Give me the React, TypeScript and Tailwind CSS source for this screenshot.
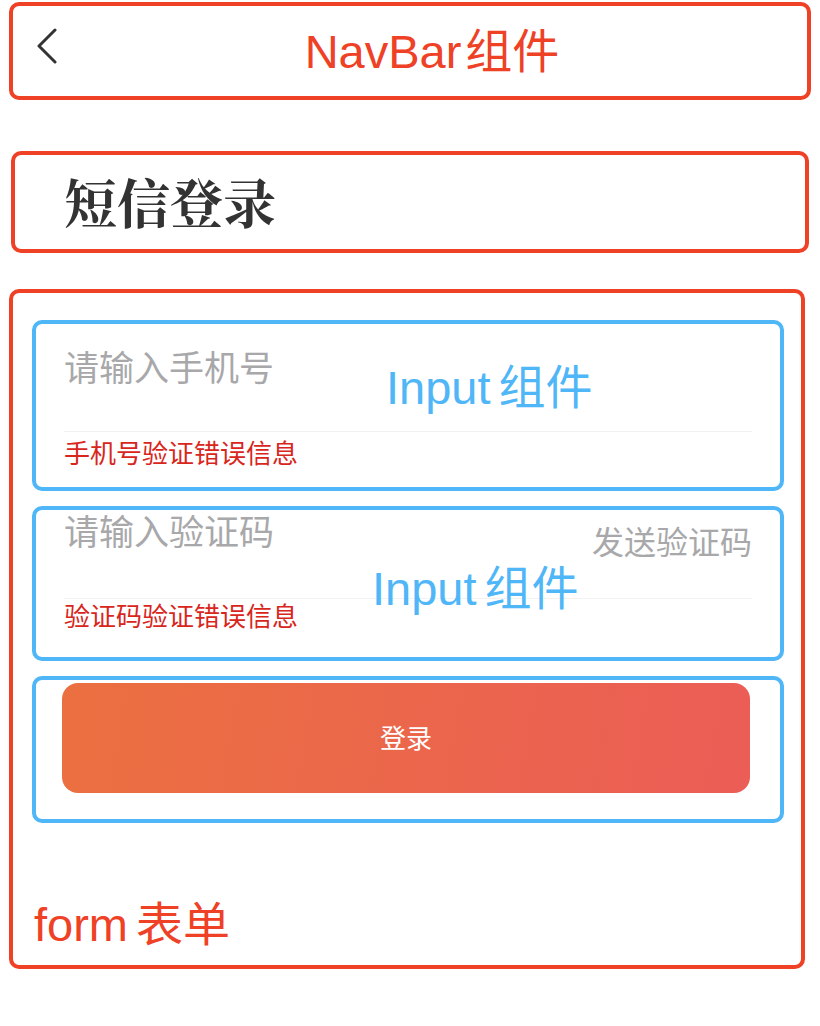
import React from 'react';

const latin = { fontFamily: '"Liberation Sans", "Noto Sans CJK SC", sans-serif' };
const cjk = { fontFamily: '"Noto Sans CJK SC", sans-serif' };
const serif = { fontFamily: '"Liberation Serif", "Noto Serif CJK SC", "Noto Sans CJK SC", serif' };

function BackIcon() {
  return (
    <svg width="24" height="36" viewBox="0 0 24 36" fill="none">
      <path d="M20 2 L4 18 L20 34" stroke="#333" strokeWidth="3" strokeLinecap="round" strokeLinejoin="round" />
    </svg>
  );
}

function InputLabel() {
  return (
    <span className="text-[47px] leading-none text-[#4fb6f7]" style={latin}>
      Input<span className="ml-[8px]">组件</span>
    </span>
  );
}

export default function App() {
  return (
    <div className="w-[820px] h-[1026px] bg-white flex flex-col">
      {/* NavBar */}
      <div className="ml-[9px] mt-[2px] w-[802px] h-[98px] border-4 border-[#ee4126] rounded-[10px] relative flex items-center justify-center">
        <div className="absolute left-[22px] top-[22px]">
          <BackIcon />
        </div>
        <span className="text-[47px] leading-none text-[#ee4126] pl-[44px]" style={latin}>
          NavBar<span className="ml-[4px]">组件</span>
        </span>
      </div>

      {/* title */}
      <div className="ml-[11px] mt-[51px] w-[798px] h-[102px] border-4 border-[#ee4126] rounded-[10px] flex items-center pl-[49px] pt-[8px]">
        <h1 className="text-[53px] leading-none font-bold text-[#333]" style={serif}>
          短信登录
        </h1>
      </div>

      {/* form */}
      <div className="ml-[9px] mt-[36px] w-[796px] h-[680px] border-4 border-[#ee4126] rounded-[10px] flex flex-col pl-[19px] pt-[27px]">
        {/* phone */}
        <div className="w-[752px] h-[171px] border-4 border-[#4fb6f7] rounded-[10px] relative flex flex-col px-[28px] pt-[24px]">
          <span className="text-[35px] leading-none text-[#a8a8aa]" style={cjk}>
            请输入手机号
          </span>
          <div className="mt-[48px] h-px bg-[#f2f2f2]" />
          <span className="mt-[7px] text-[26px] leading-none text-[#d8261c]" style={cjk}>
            手机号验证错误信息
          </span>
          <div className="absolute left-[350px] top-[40px]">
            <InputLabel />
          </div>
        </div>

        {/* code */}
        <div className="mt-[15px] w-[752px] h-[155px] border-4 border-[#4fb6f7] rounded-[10px] relative flex flex-col px-[28px] pt-[2px]">
          <div className="flex justify-between items-start">
            <span className="text-[35px] leading-none text-[#a8a8aa]" style={cjk}>
              请输入验证码
            </span>
            <span className="mt-[12px] text-[32px] leading-none text-[#a8a8aa]" style={cjk}>
              发送验证码
            </span>
          </div>
          <div className="mt-[42px] h-px bg-[#f2f2f2]" />
          <span className="mt-[3px] text-[26px] leading-none text-[#d8261c]" style={cjk}>
            验证码验证错误信息
          </span>
          <div className="absolute left-[336px] top-[55px]">
            <InputLabel />
          </div>
        </div>

        {/* submit */}
        <div className="mt-[15px] w-[752px] h-[147px] border-4 border-[#4fb6f7] rounded-[10px] flex flex-col px-[26px] pt-[3px]">
          <button className="w-[688px] h-[110px] rounded-[16px] bg-[linear-gradient(100deg,#eb7040,#eb5d56)] text-white text-[26px] pb-[4px]" style={cjk}>
            登录
          </button>
        </div>

        <div className="mt-[78px] pl-[2px]">
          <span className="text-[47px] leading-none text-[#ee4126]" style={latin}>
            form<span className="ml-[8px]">表单</span>
          </span>
        </div>
      </div>
    </div>
  );
}
